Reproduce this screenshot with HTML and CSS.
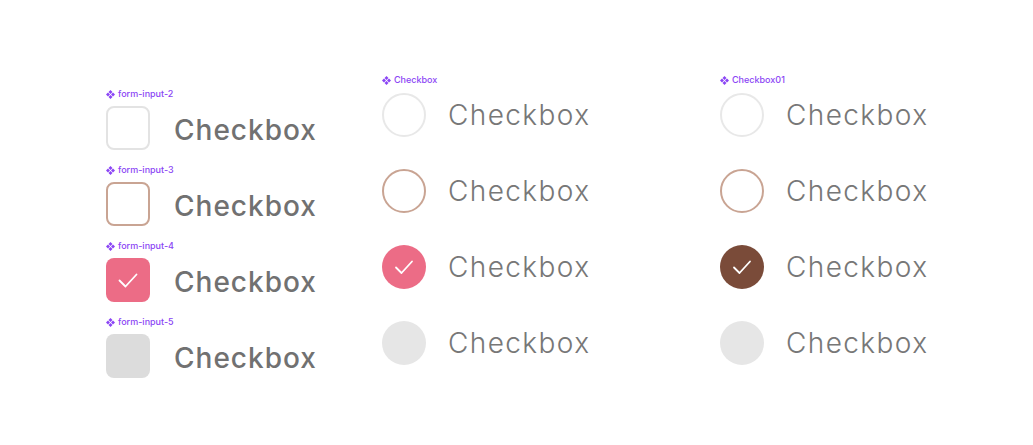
FILE: index.html
```html
<!DOCTYPE html>
<html>
<head>
<meta charset="utf-8">
<link rel="stylesheet" href="styles.css">
</head>
<body>
<div class="page">
  <div class="col col-1">
    <div class="item">
      <div class="tag"><svg class="ico" viewBox="0 0 10 10"><path d="M5 0L7.2 2.2L5 4.4L2.8 2.2Z M5 5.6L7.2 7.8L5 10L2.8 7.8Z M0 5L2.2 2.8L4.4 5L2.2 7.2Z M5.6 5L7.8 2.8L10 5L7.8 7.2Z"/></svg>form-input-2</div>
      <div class="row"><span class="box sq empty"></span><span class="lbl bold">Checkbox</span></div>
    </div>
    <div class="item">
      <div class="tag"><svg class="ico" viewBox="0 0 10 10"><path d="M5 0L7.2 2.2L5 4.4L2.8 2.2Z M5 5.6L7.2 7.8L5 10L2.8 7.8Z M0 5L2.2 2.8L4.4 5L2.2 7.2Z M5.6 5L7.8 2.8L10 5L7.8 7.2Z"/></svg>form-input-3</div>
      <div class="row"><span class="box sq hover"></span><span class="lbl bold">Checkbox</span></div>
    </div>
    <div class="item">
      <div class="tag"><svg class="ico" viewBox="0 0 10 10"><path d="M5 0L7.2 2.2L5 4.4L2.8 2.2Z M5 5.6L7.2 7.8L5 10L2.8 7.8Z M0 5L2.2 2.8L4.4 5L2.2 7.2Z M5.6 5L7.8 2.8L10 5L7.8 7.2Z"/></svg>form-input-4</div>
      <div class="row"><span class="box sq pink"><svg class="chk" viewBox="0 0 44 44"><polyline points="13.5,22.5 19.5,28.5 30.5,16.5"/></svg></span><span class="lbl bold">Checkbox</span></div>
    </div>
    <div class="item">
      <div class="tag"><svg class="ico" viewBox="0 0 10 10"><path d="M5 0L7.2 2.2L5 4.4L2.8 2.2Z M5 5.6L7.2 7.8L5 10L2.8 7.8Z M0 5L2.2 2.8L4.4 5L2.2 7.2Z M5.6 5L7.8 2.8L10 5L7.8 7.2Z"/></svg>form-input-5</div>
      <div class="row"><span class="box sq disabled"></span><span class="lbl bold">Checkbox</span></div>
    </div>
  </div>

  <div class="col col-2">
    <div class="tag"><svg class="ico" viewBox="0 0 10 10"><path d="M5 0L7.2 2.2L5 4.4L2.8 2.2Z M5 5.6L7.2 7.8L5 10L2.8 7.8Z M0 5L2.2 2.8L4.4 5L2.2 7.2Z M5.6 5L7.8 2.8L10 5L7.8 7.2Z"/></svg>Checkbox</div>
    <div class="rows">
      <div class="row"><span class="box rd empty-c"></span><span class="lbl light">Checkbox</span></div>
      <div class="row"><span class="box rd hover"></span><span class="lbl light">Checkbox</span></div>
      <div class="row"><span class="box rd pink"><svg class="chk" viewBox="0 0 44 44"><polyline points="14,22.5 19.5,28 30,16.5"/></svg></span><span class="lbl light">Checkbox</span></div>
      <div class="row"><span class="box rd disabled-c"></span><span class="lbl light">Checkbox</span></div>
    </div>
  </div>

  <div class="col col-3">
    <div class="tag"><svg class="ico" viewBox="0 0 10 10"><path d="M5 0L7.2 2.2L5 4.4L2.8 2.2Z M5 5.6L7.2 7.8L5 10L2.8 7.8Z M0 5L2.2 2.8L4.4 5L2.2 7.2Z M5.6 5L7.8 2.8L10 5L7.8 7.2Z"/></svg>Checkbox01</div>
    <div class="rows">
      <div class="row"><span class="box rd empty-c"></span><span class="lbl light">Checkbox</span></div>
      <div class="row"><span class="box rd hover"></span><span class="lbl light">Checkbox</span></div>
      <div class="row"><span class="box rd brown"><svg class="chk" viewBox="0 0 44 44"><polyline points="14,22.5 19.5,28 30,16.5"/></svg></span><span class="lbl light">Checkbox</span></div>
      <div class="row"><span class="box rd disabled-c"></span><span class="lbl light">Checkbox</span></div>
    </div>
  </div>
</div>
</body>
</html>
```

FILE: styles.css
```css
* { box-sizing: border-box; }
html, body { margin: 0; padding: 0; background: #ffffff; }
body { width: 1033px; height: 445px; overflow: hidden; font-family: Inter, "Open Sans", sans-serif; }

.page {
  display: flex;
  align-items: flex-start;
  padding-left: 106px;
}

.col-1 {
  display: flex;
  flex-direction: column;
  gap: 14px;
  padding-top: 88px;
  width: 276px;
}
.col-2 { padding-top: 74px; width: 338px; }
.col-3 { padding-top: 74px; }

.rows {
  display: flex;
  flex-direction: column;
  gap: 32px;
  margin-top: 7px;
}

.tag {
  display: flex;
  align-items: center;
  gap: 3px;
  height: 12px;
  font-size: 9px;
  line-height: 12px;
  color: #8b45f5;
  font-weight: 500;
}
.ico { width: 9px; height: 9px; fill: #8b45f5; }

.item .tag { margin-bottom: 6px; }

.row {
  display: flex;
  align-items: center;
  height: 44px;
}

.box {
  width: 44px;
  height: 44px;
  flex: none;
  display: flex;
  align-items: center;
  justify-content: center;
}
.sq { border-radius: 8px; }
.rd { border-radius: 50%; }

.empty { border: 2px solid #e3e3e3; }
.hover { border: 2px solid #c9a493; }
.pink { background: #ec6c86; }
.brown { background: #7a4b39; }
.disabled { background: #dcdcdc; }
.empty-c { border: 2px solid #e8e8e8; }
.disabled-c { background: #e6e6e6; }

.chk { width: 44px; height: 44px; }
.chk polyline { fill: none; stroke: #ffffff; stroke-width: 1.8; stroke-linecap: round; stroke-linejoin: round; }

.lbl {
  font-size: 28px;
  line-height: 44px;
  color: #717171;
  white-space: nowrap;
}
.bold { font-weight: 500; margin-left: 24px; padding-top: 3px; letter-spacing: 1px; }
.light { font-weight: 300; margin-left: 22px; color: #777777; letter-spacing: 1.4px; }
```
